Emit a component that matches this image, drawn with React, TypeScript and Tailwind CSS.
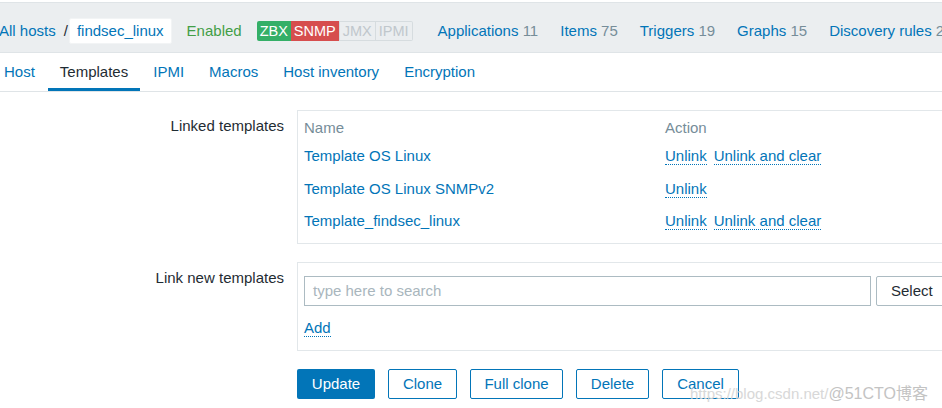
import React from 'react';

const links = [
  { label: 'Applications', count: 11 },
  { label: 'Items', count: 75 },
  { label: 'Triggers', count: 19 },
  { label: 'Graphs', count: 15 },
  { label: 'Discovery rules', count: 2 },
];

const tabs = ['Host', 'Templates', 'IPMI', 'Macros', 'Host inventory', 'Encryption'];

const linked = [
  { name: 'Template OS Linux', clear: true, gap: 'mt-[9px]' },
  { name: 'Template OS Linux SNMPv2', clear: false, gap: 'mt-[13px]' },
  { name: 'Template_findsec_linux', clear: true, gap: 'mt-[12px]' },
];

const DotLink = ({ children }: { children: React.ReactNode }) => (
  <span className="text-[#0275b8] border-b border-dotted border-[#0275b8] leading-[17px] cursor-pointer">
    {children}
  </span>
);

const App = () => {
  return (
    <div className="relative w-[942px] h-[408px] overflow-hidden bg-white text-[15px] text-[#1f2c33] font-['Liberation_Sans',Arial,sans-serif]">
      {/* Host header */}
      <div className="mt-[2px] h-[51px] pt-[7px] flex items-center bg-[#ebeef0] border-y border-[#dfe4e7] whitespace-nowrap">
        <span className="text-[#0275b8] -ml-[1px]">All hosts</span>
        <span className="ml-[8px] text-[#1f2c33]">/</span>
        <span className="ml-[1px] h-[26px] px-[7px] flex items-center bg-white border border-[#f2f4f5] rounded-[2px] text-[#0275b8]">
          findsec_linux
        </span>
        <span className="ml-[15px] text-[#429e47]">Enabled</span>
        <div className="ml-[15px] flex h-[20px] text-[14.5px] leading-[20px]">
          <span className="px-[3px] bg-[#34af67] text-white rounded-l-[2px]">ZBX</span>
          <span className="px-[3px] bg-[#d64e4e] text-white">SNMP</span>
          <span className="px-[3px] text-[#c0c7cc] border border-[#d6dcdf] leading-[18px]">JMX</span>
          <span className="px-[3px] text-[#c0c7cc] border border-l-0 border-[#d6dcdf] leading-[18px] rounded-r-[2px]">IPMI</span>
        </div>
        <div className="ml-[25px] flex gap-[22px]">
          {links.map((l) => (
            <span key={l.label} className="text-[#0275b8]">
              {l.label} <span className="text-[#768d99]">{l.count}</span>
            </span>
          ))}
        </div>
      </div>

      {/* Tabs */}
      <div className="h-[39px] flex border-b border-[#dfe4e7] -ml-[8px] whitespace-nowrap">
        {tabs.map((t) => (
          <div
            key={t}
            className={
              t === 'Templates'
                ? 'px-3 mr-[1px] flex items-center text-[#1f2c33] border-b-[3px] border-[#0275b8] pt-[3px]'
                : 'px-3 mr-[1px] flex items-center text-[#0275b8]'
            }
          >
            {t}
          </div>
        ))}
      </div>

      {/* Form */}
      <div className="pt-[18px] flex flex-col gap-[18px] whitespace-nowrap">
        <div className="flex">
          <div className="w-[284px] shrink-0 text-right pt-[5px]">Linked templates</div>
          <div className="ml-[13px] w-[660px] shrink-0 border border-[#e2e7ea] px-[6px] pt-[8px] pb-[12px]">
            <div className="flex text-[#768d99] h-[18px] items-center">
              <div className="w-[361px]">Name</div>
              <div>Action</div>
            </div>
            {linked.map((r) => (
              <div key={r.name} className={`flex ${r.gap} h-[20px] items-center`}>
                <div className="w-[361px] text-[#0275b8]">{r.name}</div>
                <div className="flex gap-[7px]">
                  <DotLink>Unlink</DotLink>
                  {r.clear && <DotLink>Unlink and clear</DotLink>}
                </div>
              </div>
            ))}
          </div>
        </div>

        <div className="flex">
          <div className="w-[284px] shrink-0 text-right pt-[5px]">Link new templates</div>
          <div className="ml-[13px] w-[660px] shrink-0 border border-[#e2e7ea] px-[6px] pt-[13px] pb-[12px]">
            <div className="flex gap-[5px]">
              <div className="w-[567px] shrink-0 h-[30px] border border-[#acbbc2] flex items-center px-[8px] text-[#a9b6bd]">
                type here to search
              </div>
              <div className="w-[80px] shrink-0 h-[30px] border border-[#acbbc2] rounded-[2px] flex items-center pl-[14px]">
                Select
              </div>
            </div>
            <div className="mt-[12px] h-[20px] flex items-center">
              <DotLink>Add</DotLink>
            </div>
          </div>
        </div>

        <div className="flex ml-[297px] gap-[13px]">
          <button className="w-[78px] h-[30px] bg-[#0275b8] text-white rounded-[2px]">Update</button>
          <button className="w-[69px] h-[30px] border border-[#0275b8] text-[#0275b8] rounded-[2px] bg-white">Clone</button>
          <button className="w-[93px] h-[30px] border border-[#0275b8] text-[#0275b8] rounded-[2px] bg-white">Full clone</button>
          <button className="w-[73px] h-[30px] border border-[#0275b8] text-[#0275b8] rounded-[2px] bg-white">Delete</button>
          <button className="w-[77px] h-[30px] border border-[#0275b8] text-[#0275b8] rounded-[2px] bg-white">Cancel</button>
        </div>
      </div>

      {/* Watermark */}
      <div className="absolute left-[690px] top-[382px] flex items-baseline whitespace-nowrap pointer-events-none">
        <span className="text-[15px] text-[#d4d4d4] opacity-90">https://blog.csdn.net/</span>
        <span className="text-[16px] text-[#bdbdbd] opacity-90 font-['Liberation_Sans','Noto_Sans_CJK_SC',sans-serif]">@51CTO博客</span>
      </div>
    </div>
  );
};

export default App;
